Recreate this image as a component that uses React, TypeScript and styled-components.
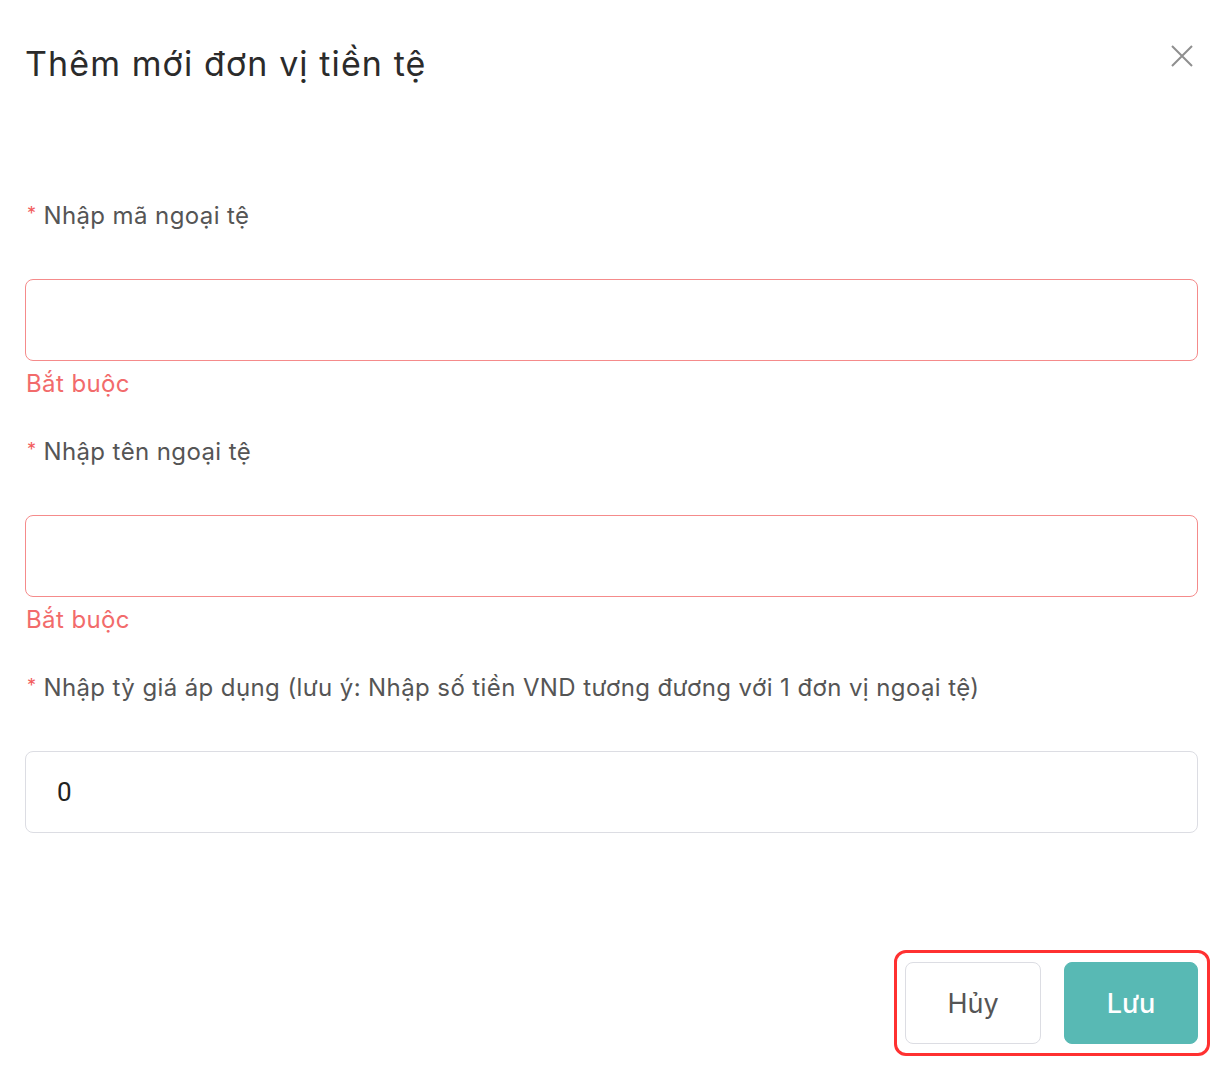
import React from "react";
import styled, { createGlobalStyle } from "styled-components";

const GlobalStyle = createGlobalStyle`
  html, body {
    margin: 0;
    padding: 0;
    background: #ffffff;
  }
  * {
    box-sizing: border-box;
  }
`;

const Modal = styled.div`
  width: 1222px;
  height: 1077px;
  padding: 44px 24px 0 25px;
  display: flex;
  flex-direction: column;
  font-family: Inter, "Noto Sans", sans-serif;
  background: #fff;
`;

const Header = styled.div`
  display: flex;
  align-items: flex-start;
  justify-content: space-between;
`;

const Title = styled.h2`
  margin: 0;
  font-size: 34px;
  line-height: 40px;
  font-weight: 400;
  letter-spacing: 1.1px;
  color: #2b2b2b;
`;

const CloseButton = styled.button`
  border: none;
  background: transparent;
  padding: 0;
  margin: 0 4px 0 0;
  width: 24px;
  height: 24px;
  cursor: pointer;
  color: #8f8f8f;
  display: flex;
  align-items: center;
  justify-content: center;
`;

const Form = styled.form`
  margin-top: 114px;
  display: flex;
  flex-direction: column;
`;

const Field = styled.div`
  display: flex;
  flex-direction: column;
  margin-bottom: 34px;
`;

const Label = styled.label`
  font-size: 24px;
  line-height: 32px;
  letter-spacing: 0.4px;
  color: #555555;
  padding-left: 2px;
  margin-bottom: 47px;

  span {
    color: #f25c5c;
    font-size: 18px;
    margin-right: 7px;
    vertical-align: 4px;
  }
`;

const Input = styled.input<{ $error?: boolean }>`
  width: 100%;
  height: 82px;
  border: 1.5px solid ${(p) => (p.$error ? "#f58b8b" : "#dcdde3")};
  border-radius: 8px;
  padding: 0 31px;
  font-family: Roboto, "Liberation Sans", sans-serif;
  font-size: 26px;
  color: #222;
  outline: none;
  background: #fff;
`;

const ErrorText = styled.div`
  margin-top: 7px;
  font-size: 24px;
  line-height: 32px;
  letter-spacing: 0.4px;
  color: #f26b6b;
  padding-left: 1px;
`;

const Footer = styled.div`
  display: flex;
  justify-content: flex-end;
  margin-top: 83px;
  margin-right: -12px;
`;

const Highlight = styled.div`
  display: flex;
  gap: 23px;
  padding: 9px 9px 9px 8px;
  border: 3px solid #ff3131;
  border-radius: 12px;
`;

const Button = styled.button<{ $primary?: boolean }>`
  height: 82px;
  width: ${(p) => (p.$primary ? "134px" : "136px")};
  border-radius: 8px;
  border: 1.5px solid ${(p) => (p.$primary ? "#58b9b4" : "#dcdde3")};
  background: ${(p) => (p.$primary ? "#58b9b4" : "#fff")};
  color: ${(p) => (p.$primary ? "#fff" : "#555")};
  font-family: Inter, "Noto Sans", sans-serif;
  font-size: 27px;
  font-weight: ${(p) => (p.$primary ? 500 : 400)};
  cursor: pointer;
`;

const App: React.FC = () => {
  return (
    <>
      <GlobalStyle />
      <Modal>
        <Header>
          <Title>Thêm mới đơn vị tiền tệ</Title>
          <CloseButton aria-label="close">
            <svg width="22" height="22" viewBox="0 0 22 22">
              <path d="M1 1 L21 21 M21 1 L1 21" stroke="currentColor" strokeWidth="2" />
            </svg>
          </CloseButton>
        </Header>

        <Form onSubmit={(e) => e.preventDefault()}>
          <Field>
            <Label>
              <span>*</span>Nhập mã ngoại tệ
            </Label>
            <Input $error />
            <ErrorText>Bắt buộc</ErrorText>
          </Field>

          <Field>
            <Label>
              <span>*</span>Nhập tên ngoại tệ
            </Label>
            <Input $error />
            <ErrorText>Bắt buộc</ErrorText>
          </Field>

          <Field>
            <Label>
              <span>*</span>Nhập tỷ giá áp dụng (lưu ý: Nhập số tiền VND tương đương với 1 đơn vị ngoại tệ)
            </Label>
            <Input defaultValue="0" />
          </Field>
        </Form>

        <Footer>
          <Highlight>
            <Button type="button">Hủy</Button>
            <Button type="submit" $primary>
              Lưu
            </Button>
          </Highlight>
        </Footer>
      </Modal>
    </>
  );
};

export default App;
